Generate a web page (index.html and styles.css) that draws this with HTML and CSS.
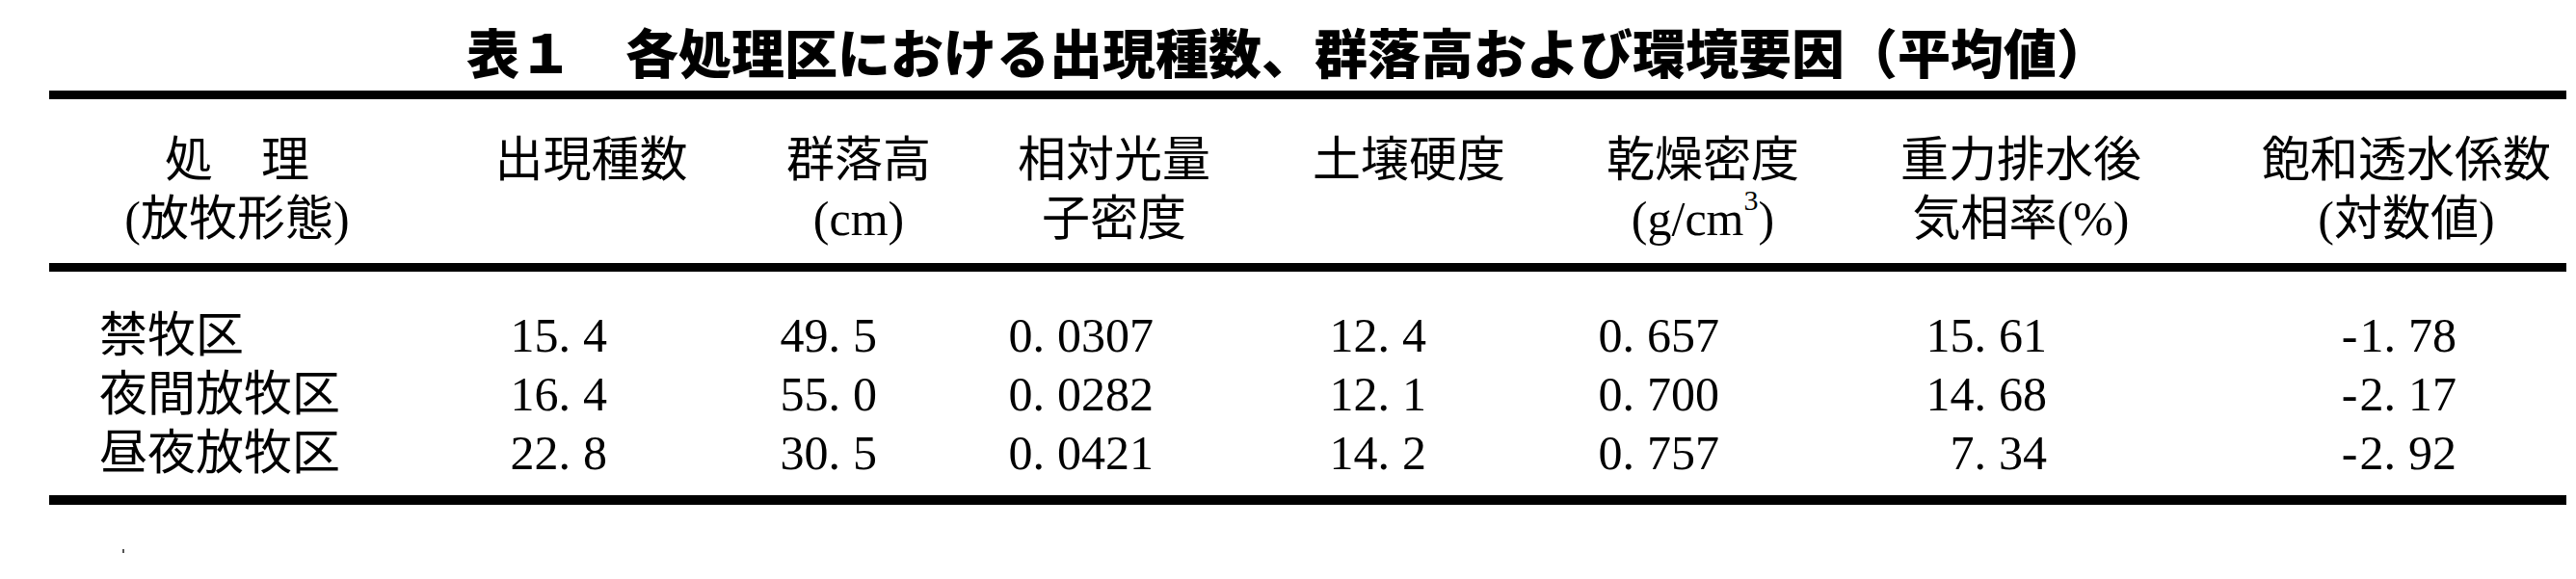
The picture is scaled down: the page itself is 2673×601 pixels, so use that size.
FILE: index.html
```html
<!DOCTYPE html>
<html lang="ja">
<head>
<meta charset="utf-8">
<title>表１</title>
<link rel="stylesheet" href="styles.css">
</head>
<body>
<div class="page">
  <h1 class="title">表１　各処理区における出現種数、群落高および環境要因（平均値）</h1>
  <div class="table">
    <div class="head">
      <div class="h">処　理<br>(放牧形態)</div>
      <div class="h">出現種数</div>
      <div class="h">群落高<br>(cm)</div>
      <div class="h">相対光量<br>子密度</div>
      <div class="h">土壌硬度</div>
      <div class="h">乾燥密度<br>(g/cm<sup class="sup">3</sup>)</div>
      <div class="h">重力排水後<br>気相率(%)</div>
      <div class="h h8">飽和透水係数<br>(対数値)</div>
    </div>
    <div class="body">
      <div class="label">禁牧区</div>
      <div class="d">15<span class="pt">.</span>4</div>
      <div class="d">49<span class="pt">.</span>5</div>
      <div class="d">0<span class="pt">.</span>0307</div>
      <div class="d">12<span class="pt">.</span>4</div>
      <div class="d">0<span class="pt">.</span>657</div>
      <div class="d">15<span class="pt">.</span>61</div>
      <div class="d"><span class="neg">-</span>1<span class="pt">.</span>78</div>

      <div class="label">夜間放牧区</div>
      <div class="d">16<span class="pt">.</span>4</div>
      <div class="d">55<span class="pt">.</span>0</div>
      <div class="d">0<span class="pt">.</span>0282</div>
      <div class="d">12<span class="pt">.</span>1</div>
      <div class="d">0<span class="pt">.</span>700</div>
      <div class="d">14<span class="pt">.</span>68</div>
      <div class="d"><span class="neg">-</span>2<span class="pt">.</span>17</div>

      <div class="label">昼夜放牧区</div>
      <div class="d">22<span class="pt">.</span>8</div>
      <div class="d">30<span class="pt">.</span>5</div>
      <div class="d">0<span class="pt">.</span>0421</div>
      <div class="d">14<span class="pt">.</span>2</div>
      <div class="d">0<span class="pt">.</span>757</div>
      <div class="d">7<span class="pt">.</span>34</div>
      <div class="d"><span class="neg">-</span>2<span class="pt">.</span>92</div>
    </div>
  </div>
  <div class="speck"></div>
</div>
</body>
</html>
```

FILE: styles.css
```css
html, body {
  margin: 0;
  padding: 0;
  background: #ffffff;
}

.page {
  width: 2673px;
  height: 601px;
  overflow: hidden;
  color: #000000;
  font-family: "Liberation Serif", "Noto Sans CJK JP", serif;
}

.title {
  margin: 0;
  padding-top: 25px;
  text-align: center;
  font-family: "Noto Sans CJK JP", sans-serif;
  font-weight: 900;
  font-size: 55px;
  line-height: 55px;
}

.table {
  margin: 14px 0 0 51px;
  width: 2612px;
}

.head,
.body {
  display: grid;
  grid-template-columns: 390px 345px 210px 320px 292px 318px 342px 395px;
}

.head {
  border-top: 9px solid #000;
  border-bottom: 9px solid #000;
  padding: 33px 0 15px;
}

.h {
  text-align: center;
  font-size: 50px;
  line-height: 61px;
  white-space: nowrap;
}

.h8 {
  padding-left: 63px;
}

.sup {
  font-size: 30px;
  line-height: 0;
  vertical-align: 26px;
}

.body {
  border-bottom: 10px solid #000;
  padding: 36px 0 13px;
}

.label {
  padding-left: 52px;
  font-size: 50px;
  line-height: 61px;
  white-space: nowrap;
}

.d {
  text-align: right;
  font-size: 50px;
  line-height: 61px;
  white-space: nowrap;
}

.pt {
  margin-right: 13px;
}

.neg {
  margin-right: 2px;
}

.body .d:nth-child(8n+2) { padding-right: 156px; }
.body .d:nth-child(8n+3) { padding-right: 86px; }
.body .d:nth-child(8n+4) { padding-right: 119px; }
.body .d:nth-child(8n+5) { padding-right: 128px; }
.body .d:nth-child(8n+6) { padding-right: 142px; }
.body .d:nth-child(8n+7) { padding-right: 144px; }
.body .d:nth-child(8n) { padding-right: 114px; }

.speck {
  margin: 46px 0 0 127px;
  width: 2px;
  height: 4px;
  background: #555;
}
```
